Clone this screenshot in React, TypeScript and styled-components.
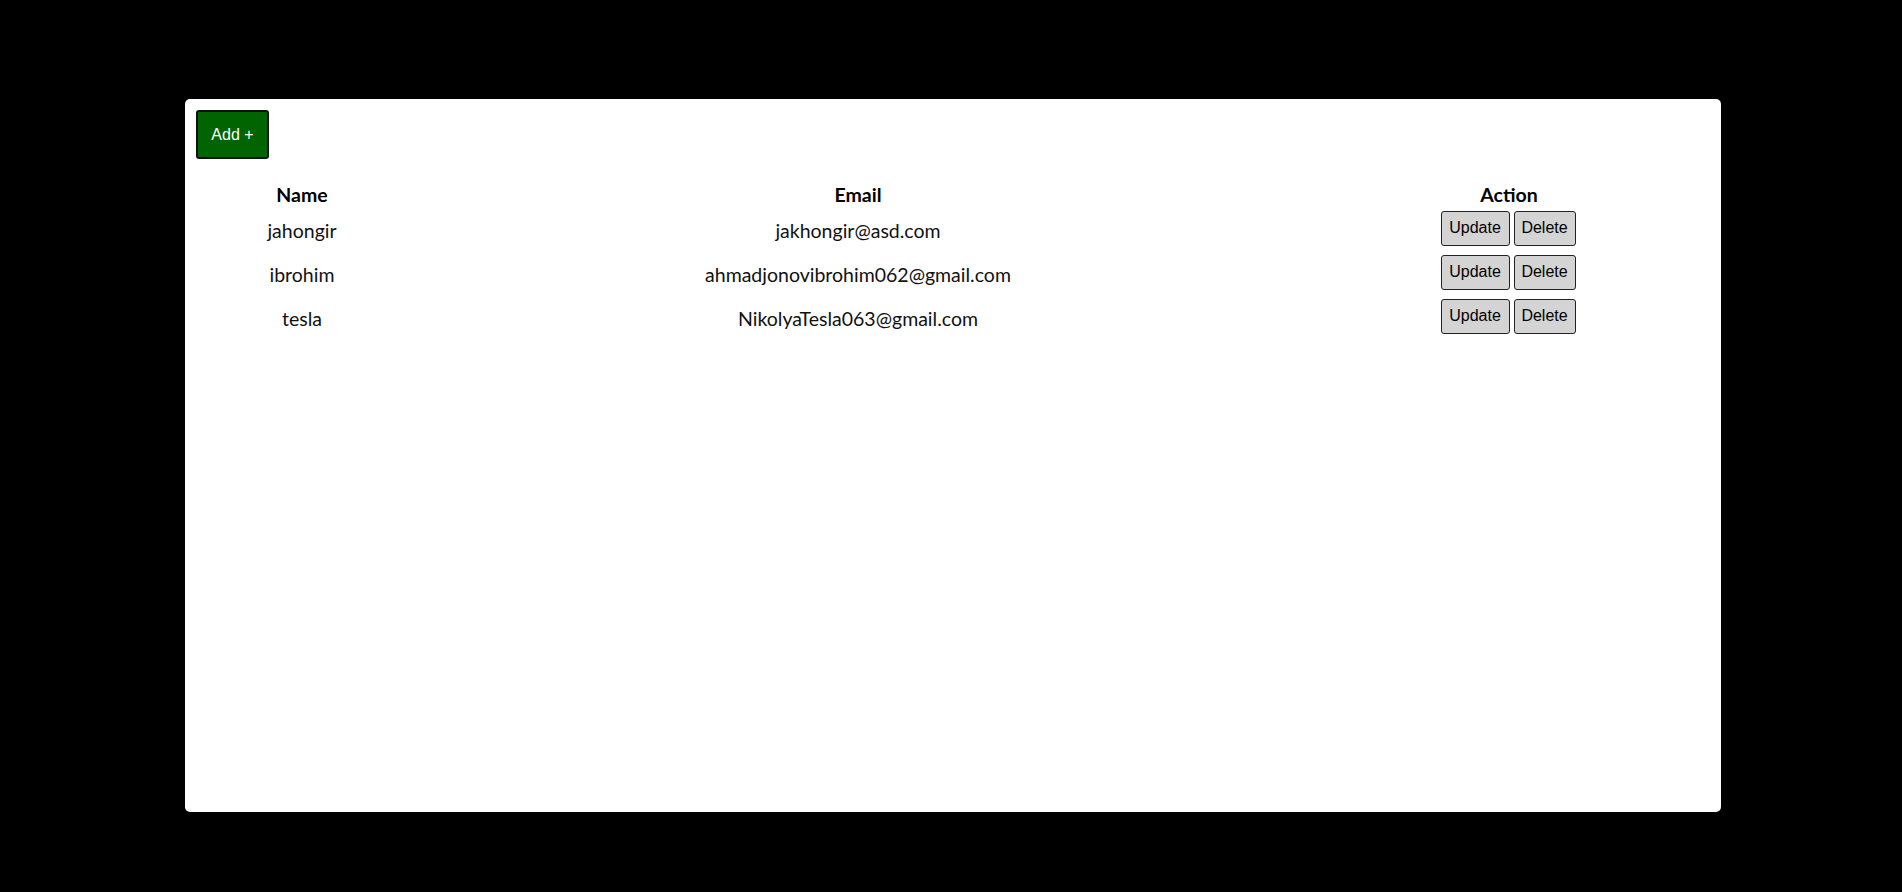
import React from "react";
import styled, { createGlobalStyle } from "styled-components";

const Global = createGlobalStyle`
  html, body { margin: 0; padding: 0; background: #000; }
  body { font-family: Lato, "Noto Sans", sans-serif; }
`;

const Page = styled.div`
  width: 1902px;
  height: 892px;
  background: #000;
  padding-top: 99px;
  box-sizing: border-box;
`;

const Card = styled.div`
  margin-left: 185px;
  width: 1536px;
  height: 713px;
  background: #fff;
  border-radius: 5px;
  padding: 11px;
  box-sizing: border-box;
`;

const AddButton = styled.button`
  display: block;
  width: 73px;
  height: 49px;
  background: #006400;
  color: #fff;
  border: 2px solid #111;
  border-radius: 3px;
  font-family: "Liberation Sans", Arial, sans-serif;
  font-size: 16px;
  padding: 0;
  cursor: pointer;
`;

const Table = styled.table`
  margin-top: 23px;
  width: 1514px;
  border-collapse: collapse;
  table-layout: fixed;
  font-family: Lato, "Noto Sans", sans-serif;
  font-size: 19.5px;
  color: #111;
`;

const Th = styled.th<{ $w: number }>`
  width: ${(p) => p.$w}px;
  height: 24px;
  padding: 0;
  font-weight: 700;
  text-align: center;
  color: #000;
`;

const Td = styled.td`
  height: 44px;
  padding: 4px 0 0;
  box-sizing: border-box;
  text-align: center;
`;

const Actions = styled.div`
  display: flex;
  justify-content: center;
  gap: 4px;
  margin-top: -4px;
  padding-right: 2px;
`;

const ActionButton = styled.button<{ $w: number }>`
  width: ${(p) => p.$w}px;
  height: 35px;
  padding: 0;
  background: #d4d4d4;
  border: 1px solid #222;
  border-radius: 3px;
  color: #000;
  font-family: "Liberation Sans", Arial, sans-serif;
  font-size: 16px;
  cursor: pointer;
`;

const users = [
  { name: "jahongir", email: "jakhongir@asd.com" },
  { name: "ibrohim", email: "ahmadjonovibrohim062@gmail.com" },
  { name: "tesla", email: "NikolyaTesla063@gmail.com" },
];

export default function App() {
  return (
    <Page>
      <Global />
      <Card>
        <AddButton>Add +</AddButton>
        <Table>
          <thead>
            <tr>
              <Th $w={212}>Name</Th>
              <Th $w={900}>Email</Th>
              <Th $w={402}>Action</Th>
            </tr>
          </thead>
          <tbody>
            {users.map((u) => (
              <tr key={u.email}>
                <Td>{u.name}</Td>
                <Td>{u.email}</Td>
                <Td>
                  <Actions>
                    <ActionButton $w={69}>Update</ActionButton>
                    <ActionButton $w={62}>Delete</ActionButton>
                  </Actions>
                </Td>
              </tr>
            ))}
          </tbody>
        </Table>
      </Card>
    </Page>
  );
}
